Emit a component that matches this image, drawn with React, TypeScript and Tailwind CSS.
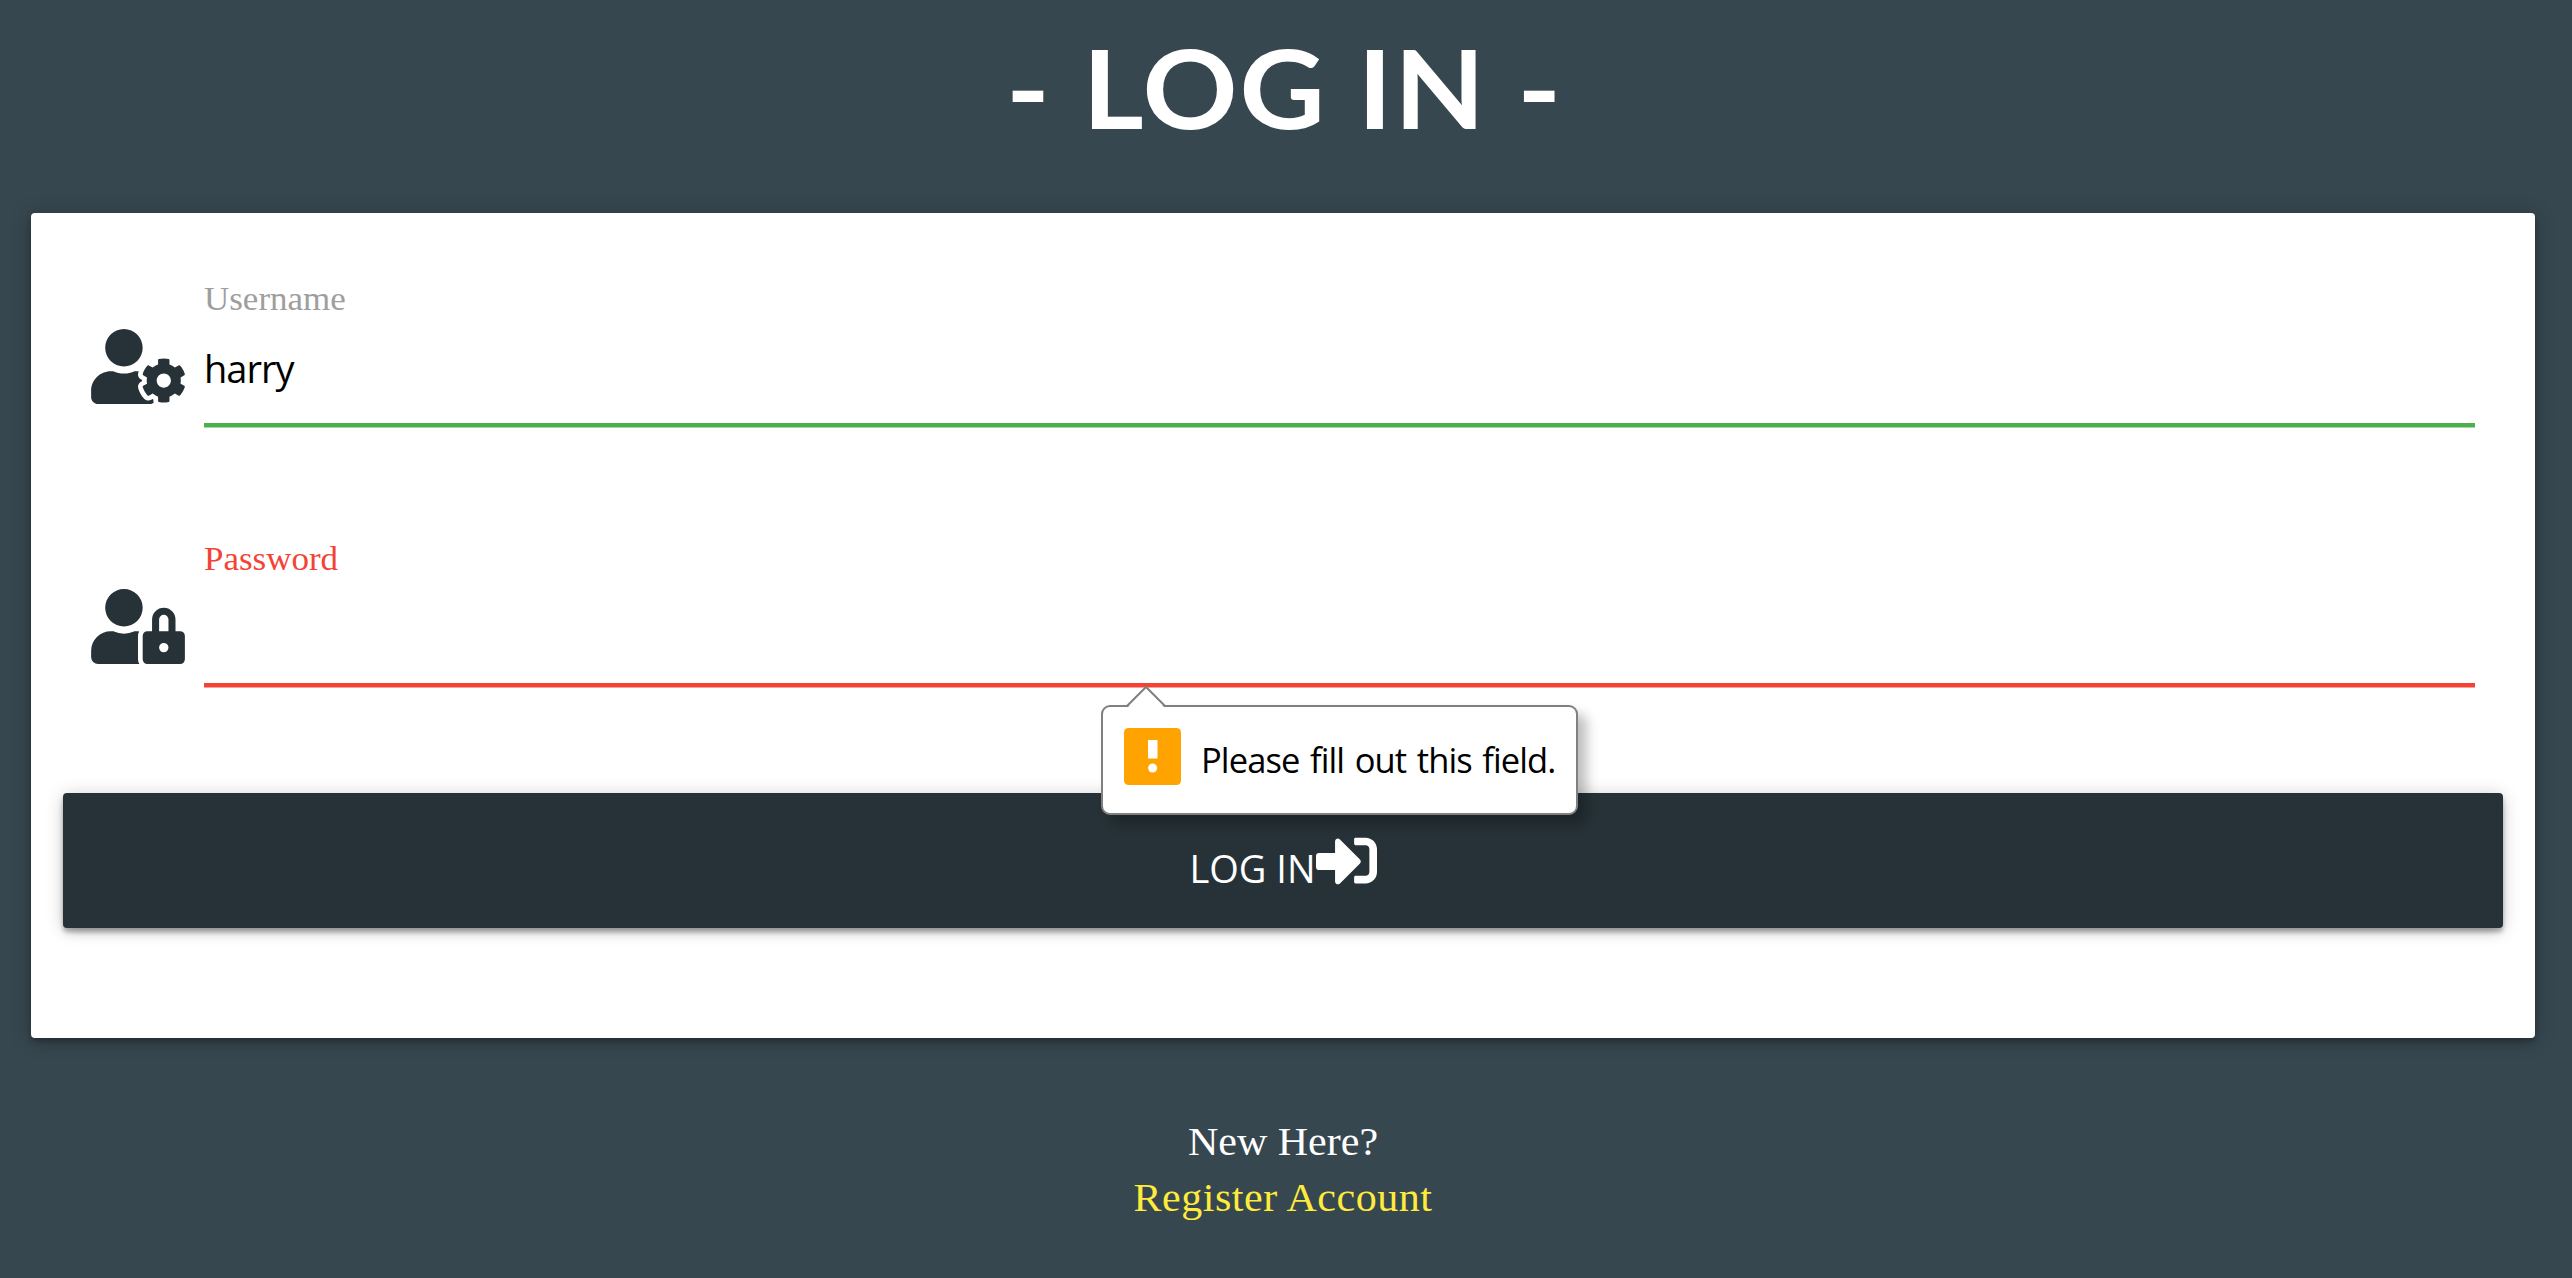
import { FaSignInAlt, FaUserCog, FaUserLock } from "react-icons/fa";
import type { ReactNode } from "react";

const serif = "font-['Liberation_Serif',serif]";
const sans = "font-['Open_Sans',sans-serif]";

function Field({ icon, label, labelClass, lineClass, value, children }: {
  icon: ReactNode;
  label: string;
  labelClass: string;
  lineClass: string;
  value: string;
  children?: ReactNode;
}) {
  return (
    <div className="flex h-[260px] items-start pr-[28px] pl-[28px]">
      <div className="mt-[52px] w-[113px] shrink-0 text-[#263238]">{icon}</div>
      <div className="relative grow">
        <div className={`h-[46px] origin-left scale-x-[1.06] text-[33px] leading-[44px] whitespace-nowrap ${serif} ${labelClass}`}>{label}</div>
        <div className={`h-[104px] border-b-4 pt-[15px] text-[38px] leading-[60px] text-black ${sans} ${lineClass}`}>
          <span className="tracking-[-1px]">{value}</span>
        </div>
        {children}
      </div>
    </div>
  );
}

function ValidationTip() {
  return (
    <div className="absolute top-[168px] left-[897px] z-10 flex h-[110px] w-[477px] items-start rounded-[9px] border-2 border-[#808080] bg-white pt-[21px] pl-[21px] shadow-[9px_9px_12px_rgba(0,0,0,0.25)]">
      <svg className="absolute -top-[22px] left-[22px]" width="44" height="24" viewBox="0 0 44 24">
        <path d="M1 24 L21 3 L41 24" fill="white" />
        <path d="M1.5 21.5 L21 2 L40.5 21.5" fill="none" stroke="#808080" strokeWidth="2" />
      </svg>
      <svg width="57" height="57" viewBox="0 0 57 57" className="shrink-0">
        <rect width="57" height="57" rx="4.5" fill="#ffa300" />
        <rect x="24" y="12" width="9.5" height="18.5" fill="white" />
        <circle cx="28.6" cy="40" r="4.5" fill="white" />
      </svg>
      <span className={`ml-[20px] text-[34.5px] leading-[64px] tracking-[-0.9px] [word-spacing:2.5px] whitespace-nowrap text-black ${sans}`}>Please fill out this field.</span>
    </div>
  );
}

export default function App() {
  return (
    <div className="h-[1278px] w-[2572px] overflow-hidden bg-[#37474f] pr-[37px] pl-[31px]">
      <h1 className="flex h-[213px] scale-x-[1.07] justify-center pt-[18px] pl-[3px] font-['Lato',sans-serif] text-[110px] leading-[136px] font-bold tracking-[1.8px] whitespace-pre text-white">
        - LOG IN -
      </h1>
      <main className="h-[825px] rounded-[4px] bg-white px-[32px] pt-[64px] shadow-[0_4px_4px_rgba(0,0,0,0.14),0_6px_10px_-4px_rgba(0,0,0,0.12),0_2px_20px_rgba(0,0,0,0.25)]">
        <Field
          icon={<FaUserCog className="h-[75px] w-[94px]" />}
          label="Username"
          labelClass="text-[#9e9e9e]"
          lineClass="border-[#4caf50] shadow-[0_1px_0_rgba(76,175,80,0.5)]"
          value="harry"
        />
        <Field
          icon={<FaUserLock className="h-[75px] w-[94px]" />}
          label="Password"
          labelClass="text-[#f44336]"
          lineClass="border-[#f44336] shadow-[0_1px_0_rgba(244,67,54,0.5)]"
          value=""
        >
          <ValidationTip />
        </Field>
        <button className={`-mt-[4px] flex h-[135px] w-full items-start justify-center rounded-[4px] bg-[#263238] text-white shadow-[0_4px_4px_rgba(0,0,0,0.24),0_6px_10px_-4px_rgba(0,0,0,0.2),0_2px_18px_rgba(0,0,0,0.2)] ${sans}`}>
          <span className="pt-[45px] text-[38px] leading-[60px]">LOG IN</span>
          <FaSignInAlt className="mt-[37px] h-[61px] w-[61px]" />
        </button>
      </main>
      <footer className={`scale-x-[1.05] pt-[76px] text-center text-[40px] leading-[56px] text-white ${serif}`}>
        <p>New Here?</p>
        <a className="tracking-[0.5px] text-[#ffeb3b]">Register Account</a>
      </footer>
    </div>
  );
}
